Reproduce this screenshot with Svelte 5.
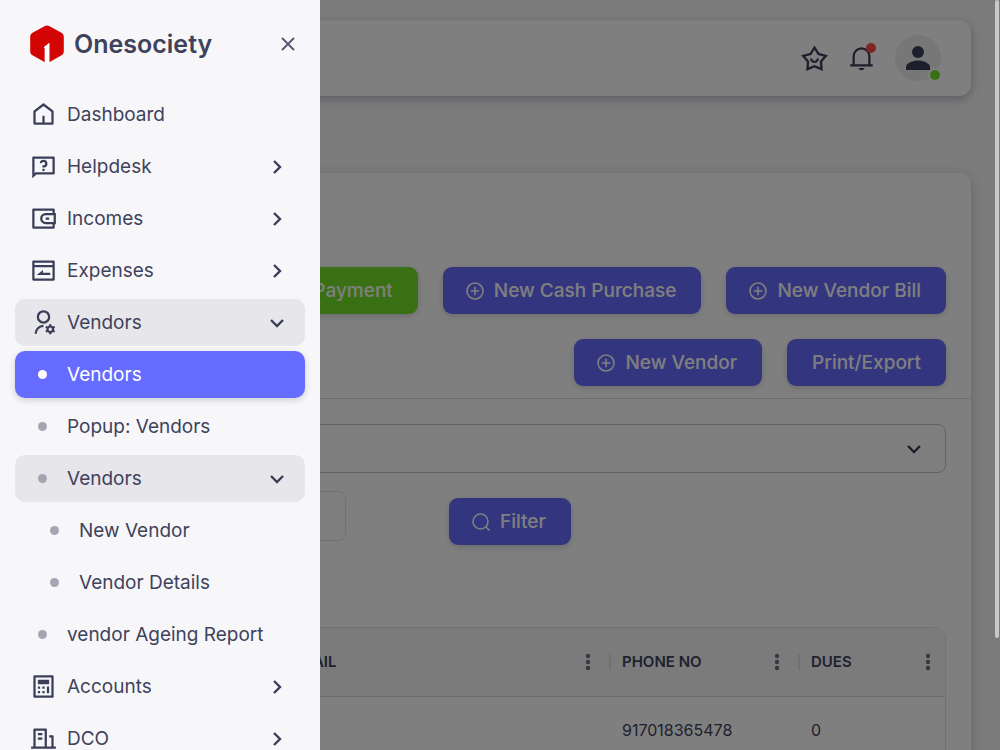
<script>
    let sidebarOpen = true;
    let billFilter = '';
    let dateFilter = '';

    const menu = [
        { label: 'Dashboard', icon: 'home' },
        { label: 'Helpdesk', icon: 'help', arrow: 'right' },
        { label: 'Incomes', icon: 'wallet', arrow: 'right' },
        { label: 'Expenses', icon: 'expense', arrow: 'right' },
        { label: 'Vendors', icon: 'vendor', arrow: 'down', open: true },
        { label: 'Vendors', level: 1, active: true },
        { label: 'Popup: Vendors', level: 1 },
        { label: 'Vendors', level: 1, arrow: 'down', open: true },
        { label: 'New Vendor', level: 2 },
        { label: 'Vendor Details', level: 2 },
        { label: 'vendor Ageing Report', level: 1 },
        { label: 'Accounts', icon: 'calculator', arrow: 'right' },
        { label: 'DCO', icon: 'building', arrow: 'right' }
    ];

    const icons = {
        home: 'M21 20a1 1 0 0 1-1 1H4a1 1 0 0 1-1-1V9.3a1 1 0 0 1 .4-.8l8-6.2a1 1 0 0 1 1.2 0l8 6.2a1 1 0 0 1 .4.8V20ZM19 19V9.8l-7-5.4-7 5.4V19h6v-6h2v6h6Z',
        help: 'M5.8 19 2 22.5V4a1 1 0 0 1 1-1h18a1 1 0 0 1 1 1v14a1 1 0 0 1-1 1H5.8Zm-.7-2H20V5H4v13.1L5.1 17ZM11 14h2v2h-2v-2ZM8.6 8.8a3.5 3.5 0 1 1 4.4 4.1H11v-2h1a1.5 1.5 0 1 0-1.5-1.8l-1.9-.3Z',
        wallet: 'M22 7h1v10h-1v3a1 1 0 0 1-1 1H3a1 1 0 0 1-1-1V4a1 1 0 0 1 1-1h18a1 1 0 0 1 1 1v3Zm-2 10h-6a5 5 0 0 1 0-10h6V5H4v14h16v-2Zm1-2V9h-7a3 3 0 0 0 0 6h7Zm-7-4h3v2h-3v-2Z',
        expense: 'M3 3h18a1 1 0 0 1 1 1v16a1 1 0 0 1-1 1H3a1 1 0 0 1-1-1V4a1 1 0 0 1 1-1Zm1 2v2h16V5H4Zm0 4v10h16V9H4Zm2 7 5.500-4.500V14H18v2H6Z',
        vendor: 'M12 14v2a6 6 0 0 0-6 6H4a8 8 0 0 1 8-8Zm0-1a6 6 0 1 1 0-12 6 6 0 0 1 0 12Zm0-2a4 4 0 1 0 0-8 4 4 0 0 0 0 8Zm2.6 7.8a3.5 3.5 0 0 1 0-1.6l-1-.6 1-1.7 1 .6c.4-.4.9-.7 1.4-.9v-1.1h2v1.1c.5.2 1 .5 1.4.9l1-.6 1 1.7-1 .6a3.5 3.5 0 0 1 0 1.6l1 .6-1 1.7-1-.6c-.4.4-.9.7-1.4.9v1.1h-2v-1.1c-.5-.2-1-.5-1.4-.9l-1 .6-1-1.7 1-.6Zm3.4.7a1.5 1.5 0 1 0 0-3 1.5 1.5 0 0 0 0 3Z',
        calculator: 'M4 2h16a1 1 0 0 1 1 1v18a1 1 0 0 1-1 1H4a1 1 0 0 1-1-1V3a1 1 0 0 1 1-1Zm1 2v16h14V4H5Zm2 2h10v4H7V6Zm0 6h2v2H7v-2Zm0 4h2v2H7v-2Zm4-4h2v2h-2v-2Zm0 4h2v2h-2v-2Zm4-4h2v6h-2v-6Z',
        building: 'M21 19h2v2H1v-2h2V4a1 1 0 0 1 1-1h10a1 1 0 0 1 1 1v15h4v-8h-2V9h3a1 1 0 0 1 1 1v9ZM5 5v14h8V5H5Zm2 6h4v2H7v-2Zm0-4h4v2H7V7Z'
    };

    const columns = [
        { key: 'id', label: '' },
        { key: 'email', label: 'EMAIL' },
        { key: 'phone', label: 'PHONE NO' },
        { key: 'dues', label: 'DUES' }
    ];

    const vendors = [{ id: '', email: '', phone: '917018365478', dues: '0' }];

    function closeSidebar() {
        sidebarOpen = false;
    }
</script>

{#snippet plus()}
    <svg class="btn-icon" viewBox="0 0 20 20" aria-hidden="true">
        <circle cx="10" cy="10" r="8" />
        <path d="M10 5.8v8.4M5.8 10h8.4" />
    </svg>
{/snippet}

<div class="page">
    <header class="navbar">
        <button class="nav-icon" aria-label="Favourites">
            <svg viewBox="0 0 24 24"><path d="m12 .5 4.2 6.700 7.700 1.900-5.100 6.100.6 7.900-7.400-3-7.400 3 .6-7.900L.1 9.100l7.700-1.900L12 .5Zm0 3.800L9.100 8.900l-5.300 1.300 3.500 4.200-.4 5.400 5.100-2.100 5.100 2.100-.4-5.400 3.500-4.200-5.300-1.300L12 4.300ZM10 12a2 2 0 0 0 4 0h2a4 4 0 0 1-8 0h2Z" /></svg>
        </button>
        <button class="nav-icon" aria-label="Notifications">
            <svg viewBox="0 0 24 24"><path d="M20 17h2v2H2v-2h2v-7a8 8 0 1 1 16 0v7Zm-2 0v-7a6 6 0 1 0-12 0v7h12Zm-8.600 3.500h5.200a2.700 2.700 0 0 1-5.200 0Z" /></svg>
            <span class="badge"></span>
        </button>
        <button class="avatar" aria-label="Account">
            <svg viewBox="0 0 24 24"><circle cx="12" cy="6" r="6" /><path d="M0 24v-3c0-4 7-6.500 12-6.500S24 17 24 21v3Z" /></svg>
            <span class="status"></span>
        </button>
    </header>

    <main class="card">
        <div class="actions">
            <button class="btn success">{@render plus()}Payment</button>
            <button class="btn">{@render plus()}New Cash Purchase</button>
            <button class="btn">{@render plus()}New Vendor Bill</button>
            <button class="btn">{@render plus()}New Vendor</button>
            <button class="btn">Print/Export</button>
        </div>

        <div class="content">
            <div class="select-box">
                <select bind:value={billFilter} aria-label="Vendor type">
                    <option value=""></option>
                </select>
                <svg class="chevron" viewBox="0 0 24 24" aria-hidden="true"><path d="m6 9 6 6 6-6" /></svg>
            </div>
            <div class="filters">
                <input type="text" bind:value={dateFilter} aria-label="Search vendors" />
                <button class="btn">
                    <svg class="btn-icon" viewBox="0 0 20 20" aria-hidden="true">
                        <circle cx="9.500" cy="9.500" r="7.500" />
                        <path d="m15 15 3.500 3.500" />
                    </svg>
                    Filter
                </button>
            </div>

            <div class="table-box">
                <table>
                    <thead>
                        <tr>
                            {#each columns as col}
                                <th class={col.key}>
                                    <div class="th-inner">
                                        {col.label}
                                        <svg class="dots" viewBox="0 0 6 18" aria-hidden="true">
                                            <circle cx="3" cy="3" r="2.200" /><circle cx="3" cy="9" r="2.200" /><circle cx="3" cy="15" r="2.200" />
                                        </svg>
                                    </div>
                                </th>
                            {/each}
                        </tr>
                    </thead>
                    <tbody>
                        {#each vendors as vendor}
                            <tr>
                                {#each columns as col}
                                    <td>{vendor[col.key]}</td>
                                {/each}
                            </tr>
                        {/each}
                    </tbody>
                </table>
            </div>
        </div>
    </main>
</div>

{#if sidebarOpen}
    <div class="backdrop"></div>
    <aside class="sidebar">
        <div class="brand">
            <svg class="logo" viewBox="0 0 34 38" aria-hidden="true">
                <path fill="#d20404" d="M14.500 1.200a5 5 0 0 1 5 0L31.500 7.800a4.500 4.500 0 0 1 2.300 4v14.500a4.500 4.500 0 0 1-2.300 4L19.300 37.300V18L14 22l.8 1.200v14L2.500 30.300a4.500 4.500 0 0 1-2.300-4V11.800a4.500 4.500 0 0 1 2.300-4Z" />
                <path fill="#fff" d="M14 22.200 19.300 18v19.500h-4.500V23.200Z" />
            </svg>
            <span class="brand-name">Onesociety</span>
            <button class="close" aria-label="Close menu" on:click={closeSidebar}>
                <svg viewBox="0 0 16 16"><path d="m2 2 12 12M14 2 2 14" /></svg>
            </button>
        </div>
        <nav>
            {#each menu as item}
                <a href="#menu" class="item level-{item.level || 0}" class:active={item.active} class:open={item.open}>
                    {#if item.icon}
                        <svg class="menu-icon" viewBox="0 0 24 24" aria-hidden="true"><path fill-rule="evenodd" d={icons[item.icon]} /></svg>
                    {:else}
                        <span class="bullet"></span>
                    {/if}
                    <span class="label">{item.label}</span>
                    {#if item.arrow}
                        <svg class="chevron" class:right={item.arrow === 'right'} viewBox="0 0 24 24" aria-hidden="true"><path d="m6 9 6 6 6-6" /></svg>
                    {/if}
                </a>
            {/each}
        </nav>
    </aside>
{/if}
<div class="scroll-thumb"></div>

<style>
    :global(body) {
        background: #f7f7f9;
        overflow: hidden;
    }

    .page, .sidebar {
        font-family: Inter, 'Noto Sans', sans-serif;
        font-size: 19px;
        color: #3f425c;
    }

    .page *, .sidebar * {
        box-sizing: border-box;
    }

    button, input, select {
        font: inherit;
        color: inherit;
    }

    button {
        border: 0;
        padding: 0;
        background: none;
        cursor: pointer;
    }

    .page {
        box-sizing: border-box;
        height: 100vh;
        overflow: hidden;
        padding: 20px 29px 0;
    }

    /* top bar */
    .navbar {
        display: flex;
        align-items: center;
        justify-content: flex-end;
        gap: 20px;
        height: 76px;
        padding: 0 30px;
        background: #fff;
        border-radius: 12px;
        box-shadow: 0 3px 10px rgba(38, 43, 67, 0.3);
    }

    .nav-icon, .avatar {
        position: relative;
        display: flex;
    }

    .nav-icon svg {
        width: 27px;
        height: 27px;
        fill: #3b3e59;
    }

    .badge {
        position: absolute;
        top: -2px;
        right: -1px;
        width: 10px;
        height: 10px;
        border-radius: 50%;
        background: #ff4d49;
    }

    .avatar {
        align-items: center;
        justify-content: center;
        width: 46px;
        height: 46px;
        border-radius: 50%;
        background: #eeeeef;
    }

    .avatar svg {
        width: 24px;
        height: 24px;
        fill: #3b3e59;
    }

    .status {
        position: absolute;
        right: -1px;
        bottom: -1px;
        width: 14px;
        height: 14px;
        border: 2px solid #fff;
        border-radius: 50%;
        background: #72e128;
    }

    .card {
        margin-top: 77px;
        min-height: 700px;
        background: #fff;
        border-radius: 12px;
        box-shadow: 0 3px 14px rgba(38, 43, 67, 0.2);
    }

    .actions {
        display: flex;
        flex-wrap: wrap;
        justify-content: flex-end;
        gap: 25px;
        padding: 94px 25px 12px;
        border-bottom: 1px solid #dcdce0;
    }

    .btn {
        display: flex;
        align-items: center;
        gap: 9px;
        height: 47px;
        padding: 0 25px;
        border-radius: 9px;
        background: #666cff;
        color: #fff;
        font-weight: 500;
        box-shadow: 0 2px 6px rgba(38, 43, 67, 0.2);
    }

    .btn.success {
        background: #72e128;
    }

    .btn-icon {
        width: 20px;
        height: 20px;
        margin-left: -3px;
        fill: none;
        stroke: currentColor;
        stroke-width: 1.6;
    }

    .content {
        padding: 25px;
    }

    .select-box {
        display: flex;
        align-items: center;
        position: relative;
    }

    select, input {
        height: 49px;
        padding: 0 16px;
        border: 1px solid #c4c5cc;
        border-radius: 8px;
        background: #fff;
    }

    select {
        width: 100%;
        appearance: none;
    }

    .select-box .chevron {
        position: absolute;
        right: 20px;
        pointer-events: none;
    }

    .filters {
        display: flex;
        align-items: flex-start;
        gap: 103px;
        margin-top: 18px;
    }

    .filters input {
        width: 292px;
        height: 50px;
        border-color: #e2e2e6;
    }

    .filters .btn {
        margin-top: 7px;
    }

    .table-box {
        margin-top: 82px;
        border: 1px solid #e2e2e6;
        border-radius: 12px 12px 0 0;
        overflow: hidden;
    }

    table {
        width: 100%;
        table-layout: fixed;
        border-collapse: collapse;
        font-size: 16px;
    }

    th {
        height: 68px;
        padding: 0;
        background: #f6f6f8;
        border-bottom: 1px solid #d8d8dd;
        font-weight: 600;
        font-size: 15px;
        text-align: left;
    }

    .th-inner {
        display: flex;
        align-items: center;
        justify-content: space-between;
        height: 16px;
        padding: 0 14px 0 11px;
        border-left: 2px solid #e2e2e6;
    }

    th.email {
        width: 332px;
    }

    th.phone {
        width: 189px;
    }

    th.phone .th-inner, th.email .th-inner {
        padding-right: 18px;
    }

    th.dues {
        width: 147px;
    }

    .dots {
        width: 6px;
        height: 18px;
        fill: #6d6f82;
    }

    td {
        height: 68px;
        padding: 0 13px;
    }

    .chevron {
        flex: none;
        width: 24px;
        height: 24px;
        fill: none;
        stroke: #3b3e59;
        stroke-width: 2.4;
    }

    .chevron.right {
        transform: rotate(-90deg);
    }

    .backdrop {
        position: fixed;
        inset: 0;
        background: rgba(0, 0, 0, 0.5);
    }

    /* sidebar */
    .sidebar {
        position: fixed;
        top: 0;
        bottom: 0;
        left: 0;
        width: 320px;
        overflow: hidden;
        background: #f7f7f9;
    }

    .brand {
        display: flex;
        align-items: center;
        height: 91px;
        padding: 0 24px 4px 30px;
    }

    .logo {
        width: 34px;
        height: 38px;
    }

    .brand-name {
        flex: 1;
        margin-left: 10px;
        font-size: 25px;
        font-weight: 600;
    }

    .close {
        display: flex;
        padding: 0;
    }

    .close svg {
        width: 16px;
        height: 16px;
        fill: none;
        stroke: #5a5d75;
        stroke-width: 2;
    }

    nav {
        display: flex;
        flex-direction: column;
        gap: 5px;
        padding: 0 15px;
    }

    .item {
        display: flex;
        align-items: center;
        gap: 10px;
        height: 47px;
        padding: 0 16px 0 15px;
        border-radius: 10px;
        color: #3f425c;
        text-decoration: none;
    }

    .item.open {
        background: #e6e6eb;
    }

    .item.active {
        background: #666cff;
        color: #fff;
        box-shadow: 0 2px 6px rgba(38, 43, 67, 0.2);
    }

    .level-2 {
        padding-left: 27px;
    }

    .menu-icon {
        width: 27px;
        height: 27px;
        fill: #3b3e59;
    }

    .bullet {
        width: 9px;
        height: 9px;
        margin: 0 10px 0 8px;
        border-radius: 50%;
        background: #a3a5b0;
    }

    .active .bullet {
        background: #fff;
    }

    .label {
        flex: 1;
    }

    .scroll-thumb {
        position: fixed;
        top: 0;
        right: 1px;
        width: 4px;
        height: 85%;
        border-radius: 2px;
        background: #c8c8c8;
    }
</style>
